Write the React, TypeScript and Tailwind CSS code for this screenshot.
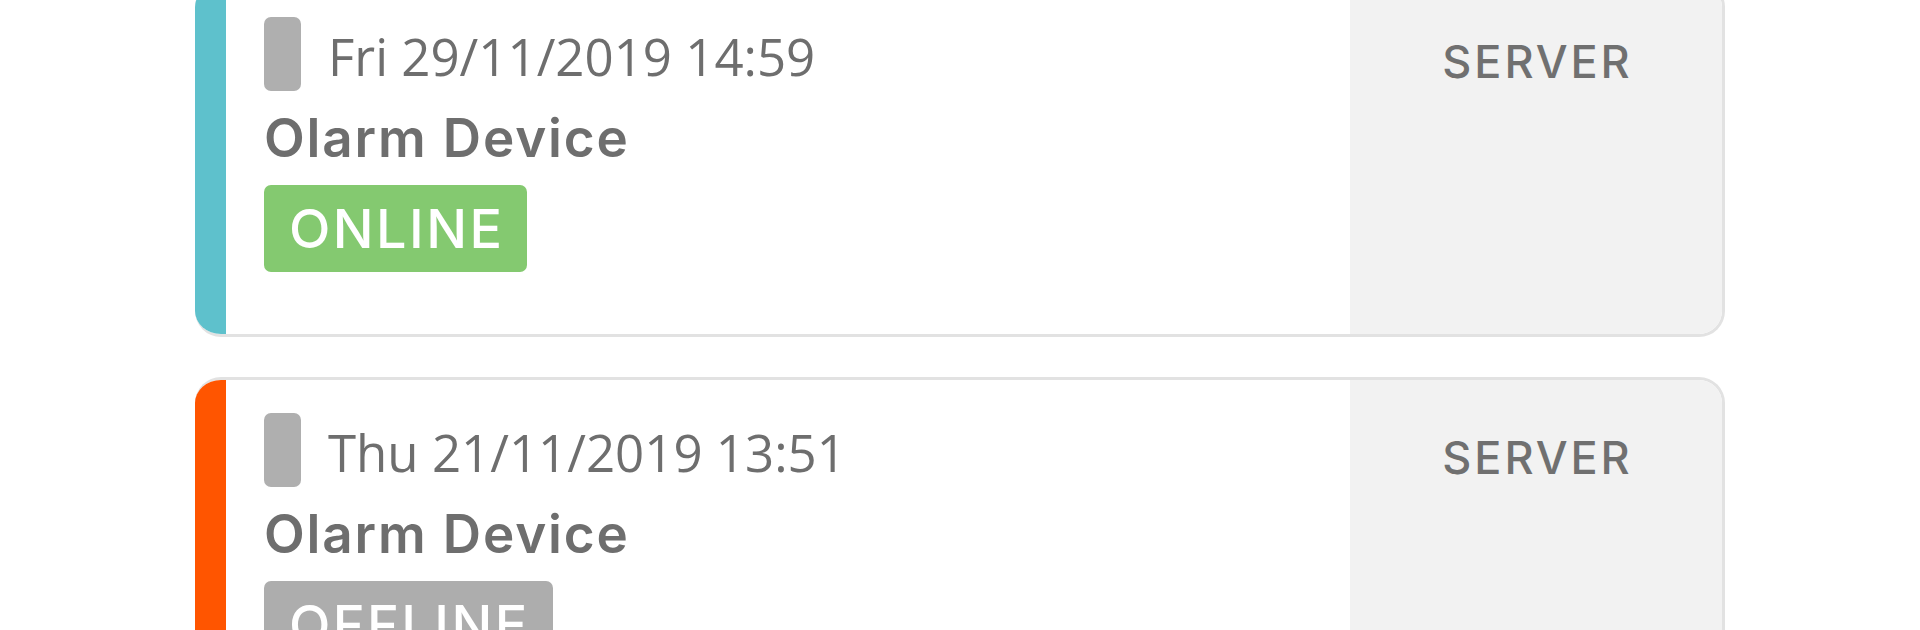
import React from "react";

type EventItem = {
  date: string;
  device: string;
  status: "ONLINE" | "OFFLINE";
  source: string;
};

const events: EventItem[] = [
  { date: "Fri 29/11/2019 14:59", device: "Olarm Device", status: "ONLINE", source: "SERVER" },
  { date: "Thu 21/11/2019 13:51", device: "Olarm Device", status: "OFFLINE", source: "SERVER" },
];

function EventCard({ item }: { item: EventItem }) {
  const online = item.status === "ONLINE";
  return (
    <div className="flex h-[356px] shrink-0 overflow-hidden rounded-[26px] border-[3px] border-l-0 border-[#e2e2e2] bg-white">
      {/* status accent */}
      <div className={online ? "w-[31px] shrink-0 bg-[#5ec1cc]" : "w-[31px] shrink-0 bg-[#ff5500]"} />

      {/* main info */}
      <div className="flex-1 pl-[38px] pt-[33px]">
        <div className="flex h-[74px] items-center gap-[27px]">
          <div className="h-[74px] w-[37px] rounded-[7px] bg-[#afafaf]" />
          <span className="pt-[5px] font-['Open_Sans',sans-serif] text-[51px] leading-none text-[#6e6e6e]">
            {item.date}
          </span>
        </div>
        <div className="mt-[15px] font-['Inter',sans-serif] text-[53px] font-semibold leading-[64px] tracking-[0.035em] text-[#6e6e6e]">
          {item.device}
        </div>
        <div
          className={
            online
              ? "mt-[15px] inline-flex h-[87px] items-center rounded-[7px] bg-[#84c970] pl-[25px] pr-[23px] font-['Inter',sans-serif] text-[54px] font-medium leading-none tracking-[0.045em] text-white"
              : "mt-[15px] inline-flex h-[87px] items-center rounded-[7px] bg-[#adadad] pl-[25px] pr-[23px] font-['Inter',sans-serif] text-[54px] font-medium leading-none tracking-[0.045em] text-white"
          }
        >
          {item.status}
        </div>
      </div>

      {/* source */}
      <div className="flex w-[372px] shrink-0 justify-center bg-[#f2f2f2] pl-[3px] pt-[50px]">
        <span className="font-['Inter',sans-serif] text-[45px] font-medium leading-[56px] tracking-[0.065em] text-[#707070]">
          {item.source}
        </span>
      </div>
    </div>
  );
}

export default function App() {
  return (
    <div className="h-[630px] overflow-hidden bg-white">
      <div className="mx-[195px] -mt-[19px] flex flex-col gap-[40px]">
        {events.map((e) => (
          <EventCard key={e.date} item={e} />
        ))}
      </div>
    </div>
  );
}
